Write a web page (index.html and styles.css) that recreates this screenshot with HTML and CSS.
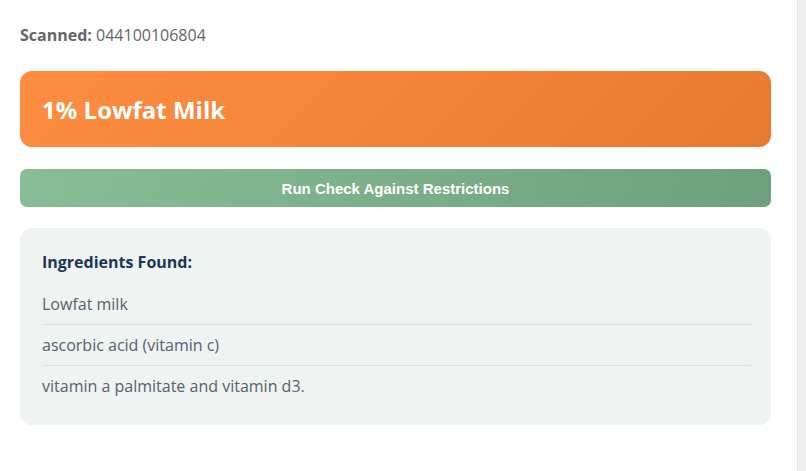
FILE: index.html
```html
<!DOCTYPE html>
<html>
<head>
<meta charset="utf-8">
<link rel="stylesheet" href="styles.css">
</head>
<body>
<div class="frame">
  <main class="page">
    <p class="scanned"><strong>Scanned:</strong> 044100106804</p>
    <div class="product"><h1>1% Lowfat Milk</h1></div>
    <button class="check">Run Check Against Restrictions</button>
    <section class="ingredients">
      <h2>Ingredients Found:</h2>
      <ul>
        <li>Lowfat milk</li>
        <li>ascorbic acid (vitamin c)</li>
        <li>vitamin a palmitate and vitamin d3.</li>
      </ul>
    </section>
  </main>
  <div class="scrollbar"></div>
</div>
</body>
</html>
```
FILE: styles.css
```css
html, body {
  margin: 0;
  padding: 0;
  height: 100%;
  background: #ffffff;
}
.frame {
  display: flex;
  height: 471px;
  overflow: hidden;
}
.page {
  flex: 1;
  padding: 0 26px 0 20px;
  font-family: "Open Sans", "Noto Sans", sans-serif;
}
.scrollbar {
  width: 8px;
  background: #f0efef;
  border-left: 1px solid #e2e2e2;
}
.scanned {
  margin: 24px 0 0;
  font-size: 16px;
  line-height: 22px;
  color: #666666;
}
.scanned strong {
  color: #666666;
  font-weight: 700;
}
.product {
  margin-top: 25px;
  height: 76px;
  border-radius: 12px;
  background: linear-gradient(135deg, #fd8d40 0%, #e87a30 100%);
  display: flex;
  align-items: center;
  padding: 0 22px;
}
.product h1 {
  margin: 0;
  color: #ffffff;
  font-size: 24px;
  font-weight: 700;
}
.check {
  display: block;
  width: 100%;
  margin-top: 22px;
  height: 38px;
  border: none;
  border-radius: 7px;
  background: linear-gradient(100deg, #88bd96 0%, #6ca17b 100%);
  color: #ffffff;
  font-family: "Liberation Sans", Arial, sans-serif;
  font-weight: 700;
  font-size: 15px;
  letter-spacing: 0;
}
.ingredients {
  margin-top: 21px;
  background: #eff3f2;
  border-radius: 12px;
  padding: 22px 20px 19px 22px;
}
.ingredients h2 {
  margin: 0 0 10px;
  font-size: 16px;
  line-height: 24px;
  font-weight: 700;
  color: #1d3557;
}
.ingredients ul {
  list-style: none;
  margin: 0;
  padding: 0;
}
.ingredients li {
  font-size: 16px;
  line-height: 24px;
  color: #566270;
  padding: 8px 0;
  border-bottom: 1px solid #dde2e2;
}
.ingredients li:last-child {
  border-bottom: none;
}
```
